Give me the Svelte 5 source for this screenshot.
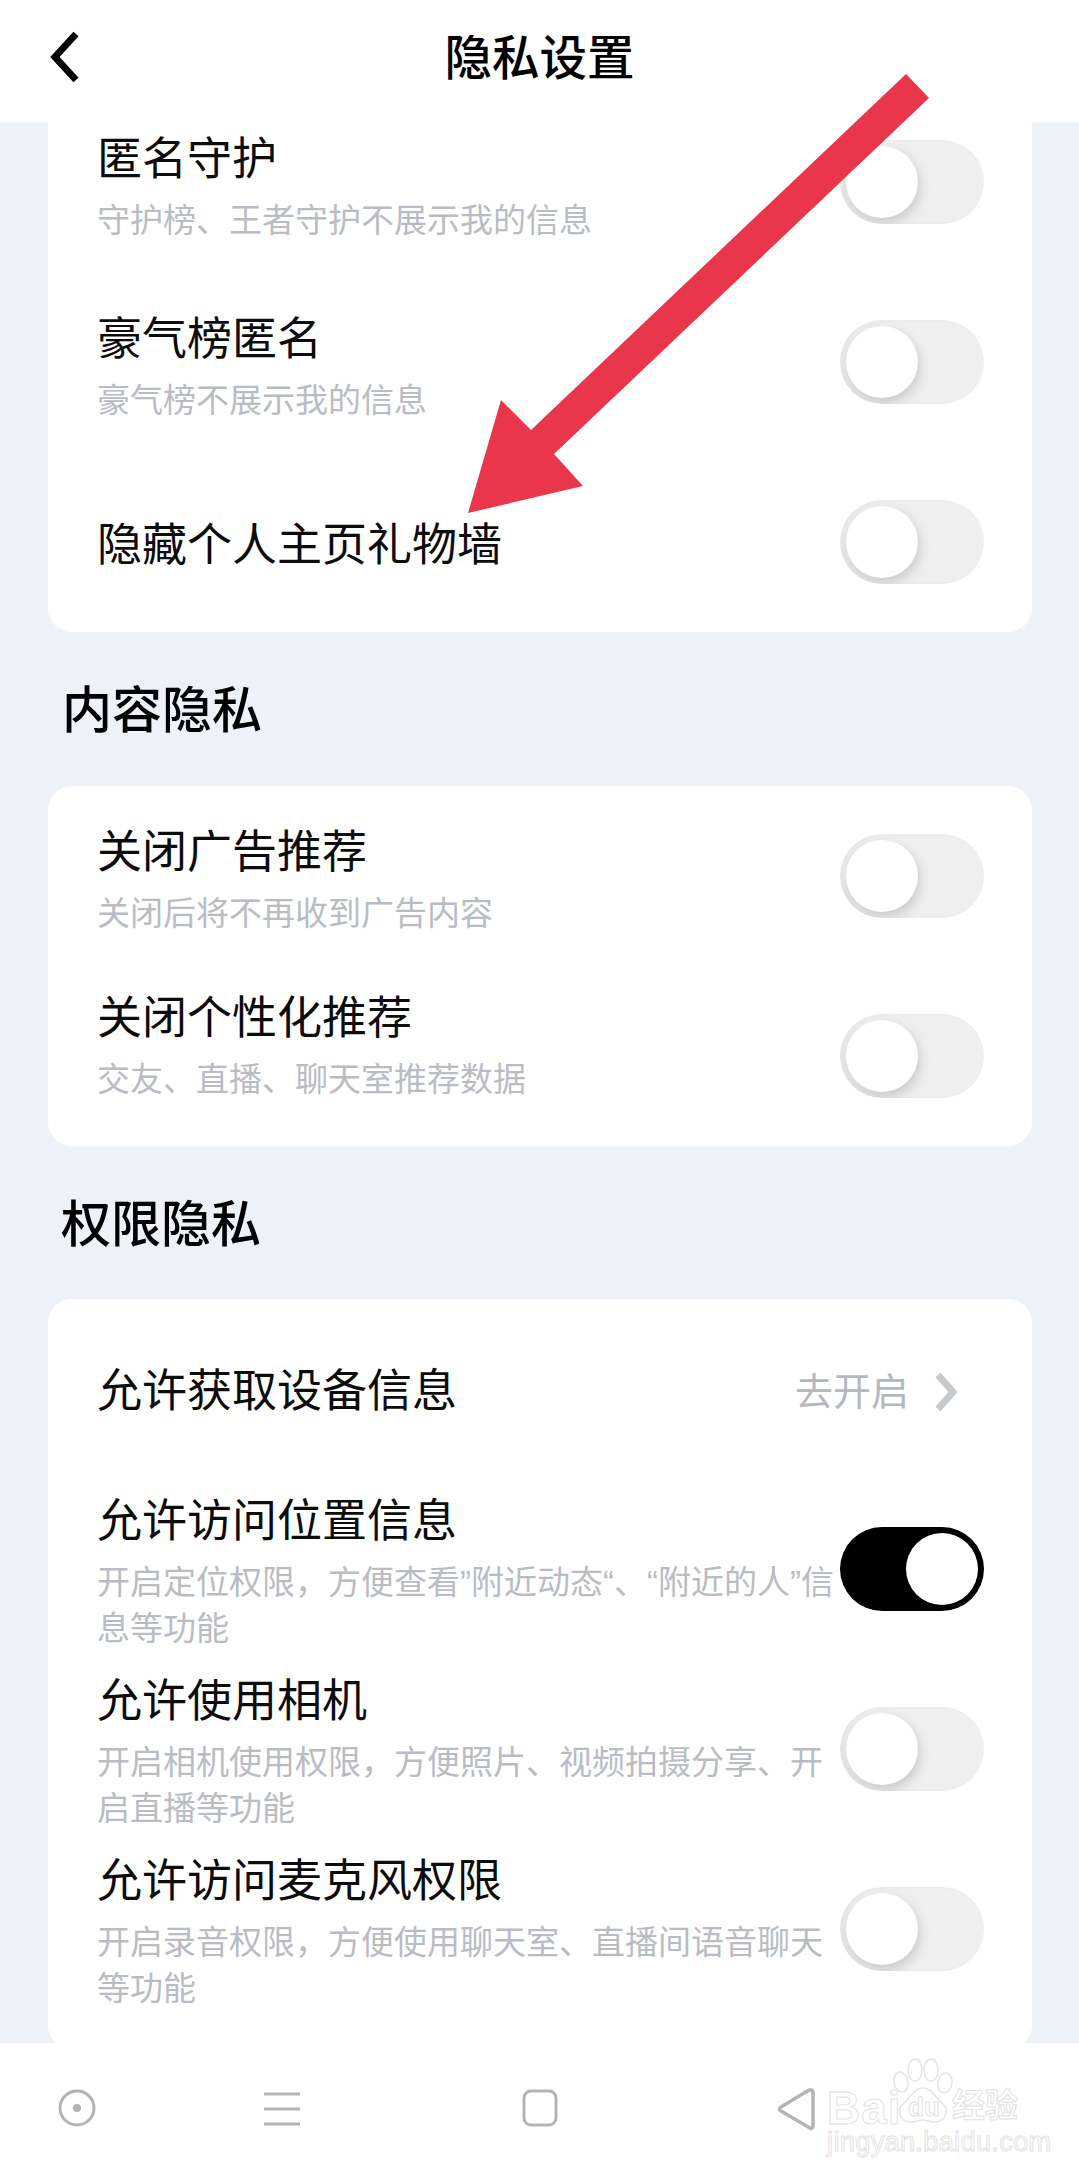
<script lang="ts">
	interface Row {
		title: string;
		lines?: string[];
		on?: boolean;
		/** vertical offset of the text block, px */
		nudge?: number;
	}

	const anonymous: Row[] = [
		{ title: '匿名守护', lines: ['守护榜、王者守护不展示我的信息'], nudge: 5 },
		{ title: '豪气榜匿名', lines: ['豪气榜不展示我的信息'], nudge: 5 },
		{ title: '隐藏个人主页礼物墙', nudge: 4 }
	];

	const content: Row[] = [
		{ title: '关闭广告推荐', lines: ['关闭后将不再收到广告内容'], nudge: 4 },
		{ title: '关闭个性化推荐', lines: ['交友、直播、聊天室推荐数据'], nudge: -10 }
	];

	const permissions: Row[] = [
		{
			title: '允许访问位置信息',
			lines: ['开启定位权限\uFF0C方便查看”附近动态“、“附近的人”信', '息等功能'],
			on: true
		},
		{
			title: '允许使用相机',
			lines: ['开启相机使用权限\uFF0C方便照片、视频拍摄分享、开', '启直播等功能']
		},
		{
			title: '允许访问麦克风权限',
			lines: ['开启录音权限\uFF0C方便使用聊天室、直播间语音聊天', '等功能']
		}
	];
</script>

{#snippet settingRow(row: Row)}
	<div class="row">
		<div class="text" style:margin-top="{(row.nudge ?? 0) * 2}px">
			<div class="title">{row.title}</div>
			{#each row.lines ?? [] as line}
				<div class="sub">{line}</div>
			{/each}
		</div>
		<span class="toggle" class:on={row.on}><span class="knob"></span></span>
	</div>
{/snippet}

<div class="page">
	<header class="topbar">
		<svg class="back" width="30" height="52" viewBox="0 0 30 52" fill="none" stroke="#000" stroke-width="7">
			<path d="M26 3 5 26l21 23" />
		</svg>
		<h1>隐私设置</h1>
	</header>

	<main class="scroller">
		<section class="card first">
			{#each anonymous as row}
				{@render settingRow(row)}
			{/each}
		</section>

		<h2>内容隐私</h2>
		<section class="card">
			{#each content as row}
				{@render settingRow(row)}
			{/each}
		</section>

		<h2 class="lower">权限隐私</h2>
		<section class="card last">
			<div class="row link">
				<div class="title">允许获取设备信息</div>
				<div class="go">
					<span>去开启</span>
					<svg width="24" height="40" viewBox="0 0 24 40" fill="none" stroke="#c6c9ce" stroke-width="7">
						<path d="M4 3l15 17L4 37" />
					</svg>
				</div>
			</div>
			{#each permissions as row}
				{@render settingRow(row)}
			{/each}
		</section>
	</main>

	<nav class="navbar">
		<svg class="nav-circle" width="38" height="38" viewBox="0 0 38 38" fill="none" stroke="#b4b4b4" stroke-width="3">
			<circle cx="19" cy="19" r="17" />
			<circle cx="19" cy="19" r="4" fill="#b4b4b4" stroke="none" />
		</svg>
		<svg class="nav-lines" width="36" height="34" viewBox="0 0 36 34" fill="none" stroke="#b4b4b4" stroke-width="3">
			<path d="M0 2h36M0 17h36M0 32h36" />
		</svg>
		<svg class="nav-square" width="36" height="38" viewBox="0 0 36 38" fill="none" stroke="#b4b4b4" stroke-width="3">
			<rect x="2" y="2" width="32" height="34" rx="7" />
		</svg>
		<svg class="nav-back" width="38" height="44" viewBox="0 0 38 44" fill="none" stroke="#b4b4b4" stroke-width="3.5" stroke-linejoin="round">
			<path d="M34 3c1 0 2 1 2 2v34c0 2-2 3-3 2L4 24c-2-1-2-3 0-4L32 3z" />
		</svg>
	</nav>

	<!-- red annotation arrow drawn over the screenshot -->
	<svg class="arrow" width="1079" height="600" viewBox="0 0 1079 600">
		<path d="M906 74 929 98 554 454 583 486 468 513 501 400 531 430z" fill="#e9364b" />
	</svg>

	<!-- watermark -->
	<div class="mark">
		<svg class="paw" width="62" height="66" viewBox="0 0 62 66" fill="#fff" stroke="#e4e4e4" stroke-width="1.5">
			<ellipse cx="9" cy="24" rx="7" ry="10" transform="rotate(-12 9 24)" />
			<ellipse cx="23" cy="12" rx="7" ry="11" />
			<ellipse cx="39" cy="12" rx="7" ry="11" />
			<ellipse cx="53" cy="25" rx="7" ry="10" transform="rotate(12 53 25)" />
			<path d="M31 30c10 0 12 10 20 16 6 6 3 18-9 18-5 0-7-2-11-2s-7 2-12 2C8 64 4 52 11 46c8-6 10-16 20-16z" />
		</svg>
		<span class="du">du</span>
		<span class="bai">Bai</span>
		<span class="jy">经验</span>
		<span class="url">jingyan.baidu.com</span>
	</div>
</div>

<style>
	:global(body) {
		margin: 0;
		background: #edf1f8;
	}

	.page {
		position: relative;
		width: 1079px;
		height: 2175px;
		display: flex;
		flex-direction: column;
		overflow: hidden;
		background: #edf1f8;
		color: #0c0c0c;
		font-family: 'Liberation Sans', 'Noto Sans CJK SC', sans-serif;
	}

	.topbar {
		position: relative;
		flex: 0 0 122px;
		display: flex;
		align-items: center;
		justify-content: center;
		background: #fff;
		z-index: 1;
	}

	.topbar h1 {
		margin: 0 0 5px;
		font-size: 47.5px;
		line-height: 60px;
		font-weight: 500;
		color: #000;
	}

	.back {
		position: absolute;
		left: 50px;
		top: 31px;
	}

	.scroller {
		flex: 1;
		min-height: 0;
		overflow: hidden;
		padding: 0 47px 0 48px;
	}

	.card {
		background: #fff;
		border-radius: 24px;
	}

	.card.first {
		margin-top: -30px;
		border-radius: 0 0 24px 24px;
	}

	.card.last {
		padding: 3px 0 27px;
	}

	h2 {
		margin: 0;
		height: 154px;
		box-sizing: border-box;
		padding: 49px 0 0 14px;
		font-size: 50px;
		line-height: 60px;
		font-weight: 500;
		color: #000;
	}

	h2.lower {
		height: 153px;
		padding: 49px 0 0 13px;
	}

	.row {
		box-sizing: border-box;
		height: 180px;
		display: flex;
		align-items: center;
		justify-content: space-between;
		padding: 0 48px 0 49px;
	}

	.text {
		flex: 1;
		min-width: 0;
	}

	.title {
		font-size: 45px;
		line-height: 60px;
		white-space: nowrap;
	}

	.title + .sub {
		margin-top: 8px;
	}

	.sub {
		font-size: 33px;
		line-height: 46px;
		color: #b9bcc4;
		white-space: nowrap;
	}

	.link .go {
		display: flex;
		align-items: center;
		gap: 25px;
		padding-right: 26px;
		font-size: 38px;
		color: #b4b7be;
	}

	.link .go span {
		margin-bottom: 8px;
	}

	.toggle {
		position: relative;
		flex: 0 0 144px;
		height: 84px;
		border-radius: 42px;
		background: #efefef;
		overflow: hidden;
		box-shadow: inset 3px 0 5px rgba(0, 0, 0, 0.04);
	}

	.card.last .toggle {
		margin-top: -6px;
	}

	.knob {
		position: absolute;
		left: 6px;
		top: 6px;
		width: 72px;
		height: 72px;
		border-radius: 50%;
		background: #fff;
		box-shadow: 2px 5px 12px rgba(0, 0, 0, 0.16);
	}

	.toggle.on {
		background: #000;
		box-shadow: none;
	}

	.toggle.on .knob {
		left: 66px;
		top: 6px;
		box-shadow: none;
	}

	.navbar {
		position: relative;
		flex: 0 0 132px;
		background: #fff;
	}

	.navbar svg {
		position: absolute;
	}

	.nav-circle {
		left: 58px;
		top: 46px;
	}

	.nav-lines {
		left: 264px;
		top: 49px;
	}

	.nav-square {
		left: 522px;
		top: 46px;
	}

	.nav-back {
		left: 777px;
		top: 44px;
	}

	.arrow {
		position: absolute;
		left: 0;
		top: 0;
		z-index: 2;
	}

	.mark {
		position: absolute;
		left: 820px;
		top: 2056px;
		width: 210px;
		height: 100px;
		z-index: 2;
		color: #fff;
		-webkit-text-stroke: 1px #e2e2e2;
		white-space: nowrap;
	}

	.mark span {
		position: absolute;
		line-height: 1;
	}

	.paw {
		position: absolute;
		left: 72px;
		top: 2px;
	}

	.bai {
		left: 7px;
		top: 29px;
		font-size: 46px;
		font-weight: 700;
		letter-spacing: 1px;
	}

	.du {
		left: 88px;
		top: 38px;
		font-size: 26px;
		font-weight: 700;
	}

	.jy {
		left: 132px;
		top: 33px;
		font-size: 33px;
		font-weight: 700;
	}

	.url {
		left: 7px;
		top: 73px;
		font-size: 27px;
		letter-spacing: 0.4px;
	}
</style>
